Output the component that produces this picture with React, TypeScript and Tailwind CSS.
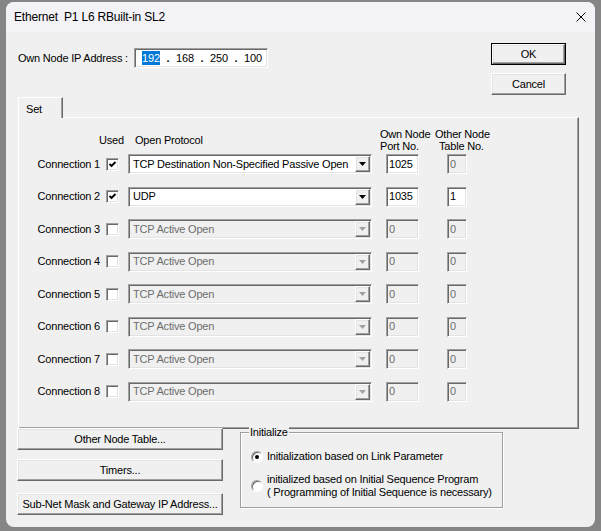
import React from 'react';

const sunken =
    'border border-t-[#a0a0a0] border-l-[#a0a0a0] border-b-white border-r-white shadow-[inset_1px_1px_0_#696969,inset_-1px_-1px_0_#e3e3e3]';
const raised =
    'border border-t-white border-l-white border-b-[#696969] border-r-[#696969] shadow-[inset_-1px_-1px_0_#a0a0a0,inset_1px_1px_0_#e3e3e3]';

type Conn = { used: boolean; protocol: string; port: string; table: string; enabled: boolean };

const connections: Conn[] = [
    { used: true, protocol: 'TCP Destination Non-Specified Passive Open', port: '1025', table: '0', enabled: true },
    { used: true, protocol: 'UDP', port: '1035', table: '1', enabled: true },
    { used: false, protocol: 'TCP Active Open', port: '0', table: '0', enabled: false },
    { used: false, protocol: 'TCP Active Open', port: '0', table: '0', enabled: false },
    { used: false, protocol: 'TCP Active Open', port: '0', table: '0', enabled: false },
    { used: false, protocol: 'TCP Active Open', port: '0', table: '0', enabled: false },
    { used: false, protocol: 'TCP Active Open', port: '0', table: '0', enabled: false },
    { used: false, protocol: 'TCP Active Open', port: '0', table: '0', enabled: false },
];

function Checkbox({ checked }: { checked: boolean }) {
    return (
        <div className={`w-[13px] h-[13px] bg-white flex items-center justify-center ${sunken}`}>
            {checked && (
                <svg width="9" height="9" viewBox="0 0 9 9">
                    <polyline points="1.5,4 3.5,6 7.5,2" fill="none" stroke="#000" strokeWidth="1.8" />
                </svg>
            )}
        </div>
    );
}

function Combo({ value, enabled }: { value: string; enabled: boolean }) {
    return (
        <div
            className={`w-[244px] h-[20px] flex items-center pl-[4px] pr-[1px] ${sunken} ${
                enabled ? 'bg-white text-black' : 'bg-[#f0f0f0] text-[#6d6d6d]'
            }`}
        >
            <span className="flex-1 truncate">{value}</span>
            <div className={`w-[15px] h-[16px] bg-[#f0f0f0] flex items-center justify-center ${raised}`}>
                <svg width="7" height="4" viewBox="0 0 7 4">
                    <path d="M0 0H7L3.5 4Z" fill={enabled ? '#000' : '#a0a0a0'} />
                </svg>
            </div>
        </div>
    );
}

function Field({ value, enabled, width }: { value: string; enabled: boolean; width: string }) {
    return (
        <div
            className={`${width} h-[20px] flex items-center pl-[2px] ${sunken} ${
                enabled ? 'bg-white text-black' : 'bg-[#f0f0f0] text-[#6d6d6d]'
            }`}
        >
            {value}
        </div>
    );
}

function Radio({ checked }: { checked: boolean }) {
    return (
        <div
            className={`w-[12px] h-[12px] shrink-0 rounded-full bg-white flex items-center justify-center border border-t-[#a0a0a0] border-l-[#a0a0a0] border-b-white border-r-white shadow-[inset_1px_1px_0_#696969]`}
        >
            {checked && <div className="w-[4px] h-[4px] rounded-full bg-black" />}
        </div>
    );
}

function PushButton({ label, className = '' }: { label: string; className?: string }) {
    return (
        <div className={`h-[22px] bg-[#f0f0f0] flex items-center justify-center ${raised} ${className}`}>
            {label}
        </div>
    );
}

export default function App() {
    return (
        <div
            className="w-[601px] h-[531px] bg-[#858585] pt-[2px] pl-[6px] text-[11px] text-black tracking-[-0.2px]"
            style={{ fontFamily: '"Liberation Sans", Arial, sans-serif' }}
        >
            <div className="w-[589px] h-[525px] rounded-[8px] bg-[#f0f0f0] overflow-hidden flex flex-col">
                {/* title bar */}
                <div className="h-[30px] bg-[#f3f2f7] flex items-center justify-between pl-[8px] pr-[9px]">
                    <span className="text-[12px] whitespace-pre">Ethernet  P1 L6 RBuilt-in SL2</span>
                    <svg width="10" height="10" viewBox="0 0 10 10">
                        <path d="M0.5 0.5L9.5 9.5M9.5 0.5L0.5 9.5" stroke="#000" strokeWidth="1" />
                    </svg>
                </div>

                <div className="flex flex-col">
                    {/* IP + OK/Cancel */}
                    <div className="flex justify-between pl-[12px] pr-[29px] pt-[11px]">
                        <div className="flex items-center gap-[6px] mt-[5px] h-[20px]">
                            <span>Own Node IP Address :</span>
                            <div className={`w-[134px] h-[20px] bg-white flex items-center pl-[5px] ${sunken}`}>
                                <span className="w-[22px] flex justify-center">
                                    <span className="bg-[#0078d7] text-white leading-[14px]">192</span>
                                </span>
                                <span className="w-[12px] text-center font-bold">.</span>
                                <span className="w-[22px] text-center">168</span>
                                <span className="w-[12px] text-center font-bold">.</span>
                                <span className="w-[22px] text-center">250</span>
                                <span className="w-[12px] text-center font-bold">.</span>
                                <span className="w-[22px] text-center">100</span>
                            </div>
                        </div>
                        <div className="flex flex-col gap-[8px] w-[75px]">
                            <div className="h-[22px] border border-black">
                                <div className={`h-full bg-[#f0f0f0] flex items-center justify-center ${raised}`}>OK</div>
                            </div>
                            <PushButton label="Cancel" />
                        </div>
                    </div>

                    {/* tab */}
                    <div className={`relative z-10 ml-[12px] mt-[2px] -mb-[1px] w-[45px] h-[21px] bg-[#f0f0f0] pl-[7px] pt-[3px] border border-b-0 border-t-white border-l-white border-r-[#696969] shadow-[inset_-1px_0_0_#a0a0a0]`}>
                        Set
                    </div>

                    {/* panel */}
                    <div className={`ml-[12px] w-[561px] h-[312px] pt-[10px] border border-t-white border-l-white border-b-[#696969] border-r-[#696969] shadow-[inset_-1px_-1px_0_#a0a0a0]`}>
                        <div className="flex items-center h-[24px] leading-[12px]">
                            <div className="w-[80px]" />
                            <div className="w-[36px]">Used</div>
                            <div className="w-[245px]">Open Protocol</div>
                            <div className="w-[55px]">
                                Own Node
                                <br />
                                Port No.
                            </div>
                            <div>
                                Other Node
                                <br />
                                <span className="pl-[4px]">Table No.</span>
                            </div>
                        </div>
                        <div className="flex flex-col gap-[12.5px] mt-[2px]">
                            {connections.map((c, i) => (
                                <div key={i} className="flex items-center h-[20px]">
                                    <div className="w-[81px] text-right">Connection {i + 1}</div>
                                    <div className="ml-[6px]">
                                        <Checkbox checked={c.used} />
                                    </div>
                                    <div className="ml-[9px]">
                                        <Combo value={c.protocol} enabled={c.enabled} />
                                    </div>
                                    <div className="ml-[14px]">
                                        <Field value={c.port} enabled={c.enabled} width="w-[33px]" />
                                    </div>
                                    <div className="ml-[28px]">
                                        <Field value={c.table} enabled={i === 1} width="w-[20px]" />
                                    </div>
                                </div>
                            ))}
                        </div>
                    </div>

                    {/* bottom */}
                    <div className="flex ml-[11px] -mt-[1px]">
                        <div className="flex flex-col w-[206px] relative z-10">
                            <PushButton label="Other Node Table..." />
                            <PushButton label="Timers..." className="mt-[9px]" />
                            <PushButton label="Sub-Net Mask and Gateway IP Address..." className="mt-[12px]" />
                        </div>
                        <div className="relative ml-[17px] mt-[4px] w-[263px] h-[76px] border border-[#a0a0a0] shadow-[1px_1px_0_#fff,inset_1px_1px_0_#fff] pl-[10px] pt-[17px] leading-[13px]">
                            <span className="absolute left-[8px] -top-[7px] bg-[#f0f0f0] px-[1px]">Initialize</span>
                            <div className="flex items-center gap-[4px] h-[13px]">
                                <Radio checked />
                                <span>Initialization based on Link Parameter</span>
                            </div>
                            <div className="flex items-center gap-[4px] mt-[10px]">
                                <Radio checked={false} />
                                <span>
                                    initialized based on Initial Sequence Program
                                    <br />( Programming of Initial Sequence is necessary)
                                </span>
                            </div>
                        </div>
                    </div>
                </div>
            </div>
        </div>
    );
}
